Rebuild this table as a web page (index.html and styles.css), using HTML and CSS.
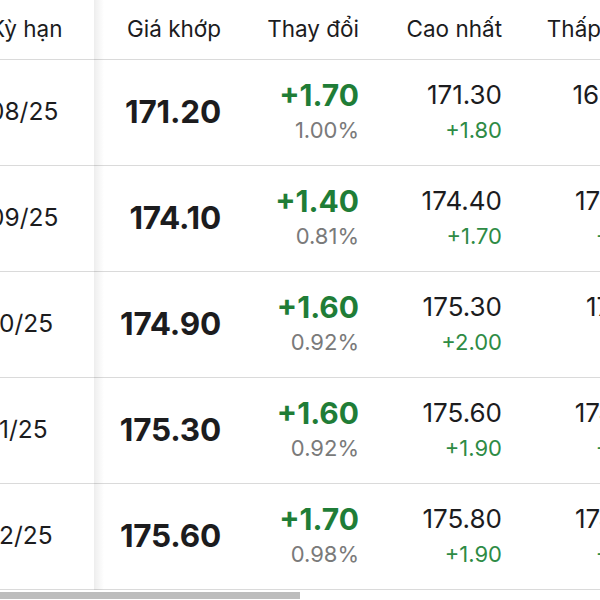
FILE: index.html
```html
<!DOCTYPE html>
<html lang="vi">
<head>
<meta charset="utf-8">
<link rel="stylesheet" href="styles.css">
</head>
<body>
<div class="board">
  <div class="row head">
    <div class="cell first"><span class="shift">Kỳ hạn</span></div>
    <div class="cell">Giá khớp</div>
    <div class="cell">Thay đổi</div>
    <div class="cell">Cao nhất</div>
    <div class="cell">Thấp nhất</div>
  </div>
  <div class="row">
    <div class="cell first"><span class="shift">08/25</span></div>
    <div class="cell price">171.20</div>
    <div class="cell stack"><span class="chg">+1.70</span><span class="pct">1.00%</span></div>
    <div class="cell stack"><span class="val">171.30</span><span class="sub">+1.80</span></div>
    <div class="cell stack"><span class="val">169.80</span><span class="sub">-1.1</span></div>
  </div>
  <div class="row">
    <div class="cell first"><span class="shift">09/25</span></div>
    <div class="cell price">174.10</div>
    <div class="cell stack"><span class="chg">+1.40</span><span class="pct">0.81%</span></div>
    <div class="cell stack"><span class="val">174.40</span><span class="sub">+1.70</span></div>
    <div class="cell stack"><span class="val">172.70</span><span class="sub">-0.40</span></div>
  </div>
  <div class="row">
    <div class="cell first"><span class="shift">10/25</span></div>
    <div class="cell price">174.90</div>
    <div class="cell stack"><span class="chg">+1.60</span><span class="pct">0.92%</span></div>
    <div class="cell stack"><span class="val">175.30</span><span class="sub">+2.00</span></div>
    <div class="cell stack"><span class="val">171.10</span><span class="sub">-1.1</span></div>
  </div>
  <div class="row">
    <div class="cell first"><span class="shift">11/25</span></div>
    <div class="cell price">175.30</div>
    <div class="cell stack"><span class="chg">+1.60</span><span class="pct">0.92%</span></div>
    <div class="cell stack"><span class="val">175.60</span><span class="sub">+1.90</span></div>
    <div class="cell stack"><span class="val">174.00</span><span class="sub">-0.40</span></div>
  </div>
  <div class="row">
    <div class="cell first"><span class="shift">12/25</span></div>
    <div class="cell price">175.60</div>
    <div class="cell stack"><span class="chg">+1.70</span><span class="pct">0.98%</span></div>
    <div class="cell stack"><span class="val">175.80</span><span class="sub">+1.90</span></div>
    <div class="cell stack"><span class="val">174.30</span><span class="sub">-0.40</span></div>
  </div>
  <div class="scrollbar"><div class="thumb"></div></div>
</div>
</body>
</html>
```
FILE: styles.css
```css
html, body {
  margin: 0;
  padding: 0;
  background: #ffffff;
}
body {
  font-family: Inter, "Noto Sans", sans-serif;
  color: #1c1c1e;
}
.board {
  position: relative;
  width: 600px;
  height: 600px;
  overflow: hidden;
}
.board::after {
  content: "";
  position: absolute;
  left: 94px;
  top: 0;
  width: 10px;
  height: 590px;
  background: linear-gradient(to right, rgba(0,0,0,0.07), rgba(0,0,0,0));
}
.row {
  display: grid;
  grid-template-columns: 95px 140px 138px 143px 152px;
  width: 668px;
  height: 105px;
  border-bottom: 1px solid #dadada;
}
.row.head {
  height: 59px;
}
.cell {
  display: flex;
  align-items: center;
  justify-content: flex-end;
  padding-right: 14px;
  white-space: nowrap;
}
.head .cell {
  font-size: 22.5px;
  font-weight: 400;
  color: #1c1c1e;
  padding-bottom: 3px;
}
.cell.first {
  justify-content: flex-start;
  padding-right: 0;
  overflow: hidden;
  font-size: 24.5px;
  padding-bottom: 3px;
}
.head .cell.first {
  font-size: 22.5px;
}
.shift {
  margin-left: -11px;
}
.head .shift {
  margin-left: -10px;
}
.price {
  font-size: 31.5px;
  font-weight: 700;
  letter-spacing: -0.2px;
  padding-bottom: 2px;
}
.stack {
  flex-direction: column;
  align-items: flex-end;
  justify-content: center;
  padding-bottom: 3px;
}
.chg {
  font-size: 30px;
  font-weight: 700;
  color: #1f7d37;
  line-height: 36px;
}
.pct {
  font-size: 22px;
  color: #7a7a7a;
  line-height: 30px;
  margin-top: 2px;
}
.val {
  font-size: 26px;
  color: #1c1c1e;
  line-height: 36px;
}
.sub {
  font-size: 22px;
  color: #2e8b45;
  line-height: 30px;
  margin-top: 2px;
}
.scrollbar {
  margin-top: 2px;
  height: 7px;
  width: 600px;
}
.thumb {
  width: 300px;
  height: 7px;
  background: #bdbdbd;
}
```
